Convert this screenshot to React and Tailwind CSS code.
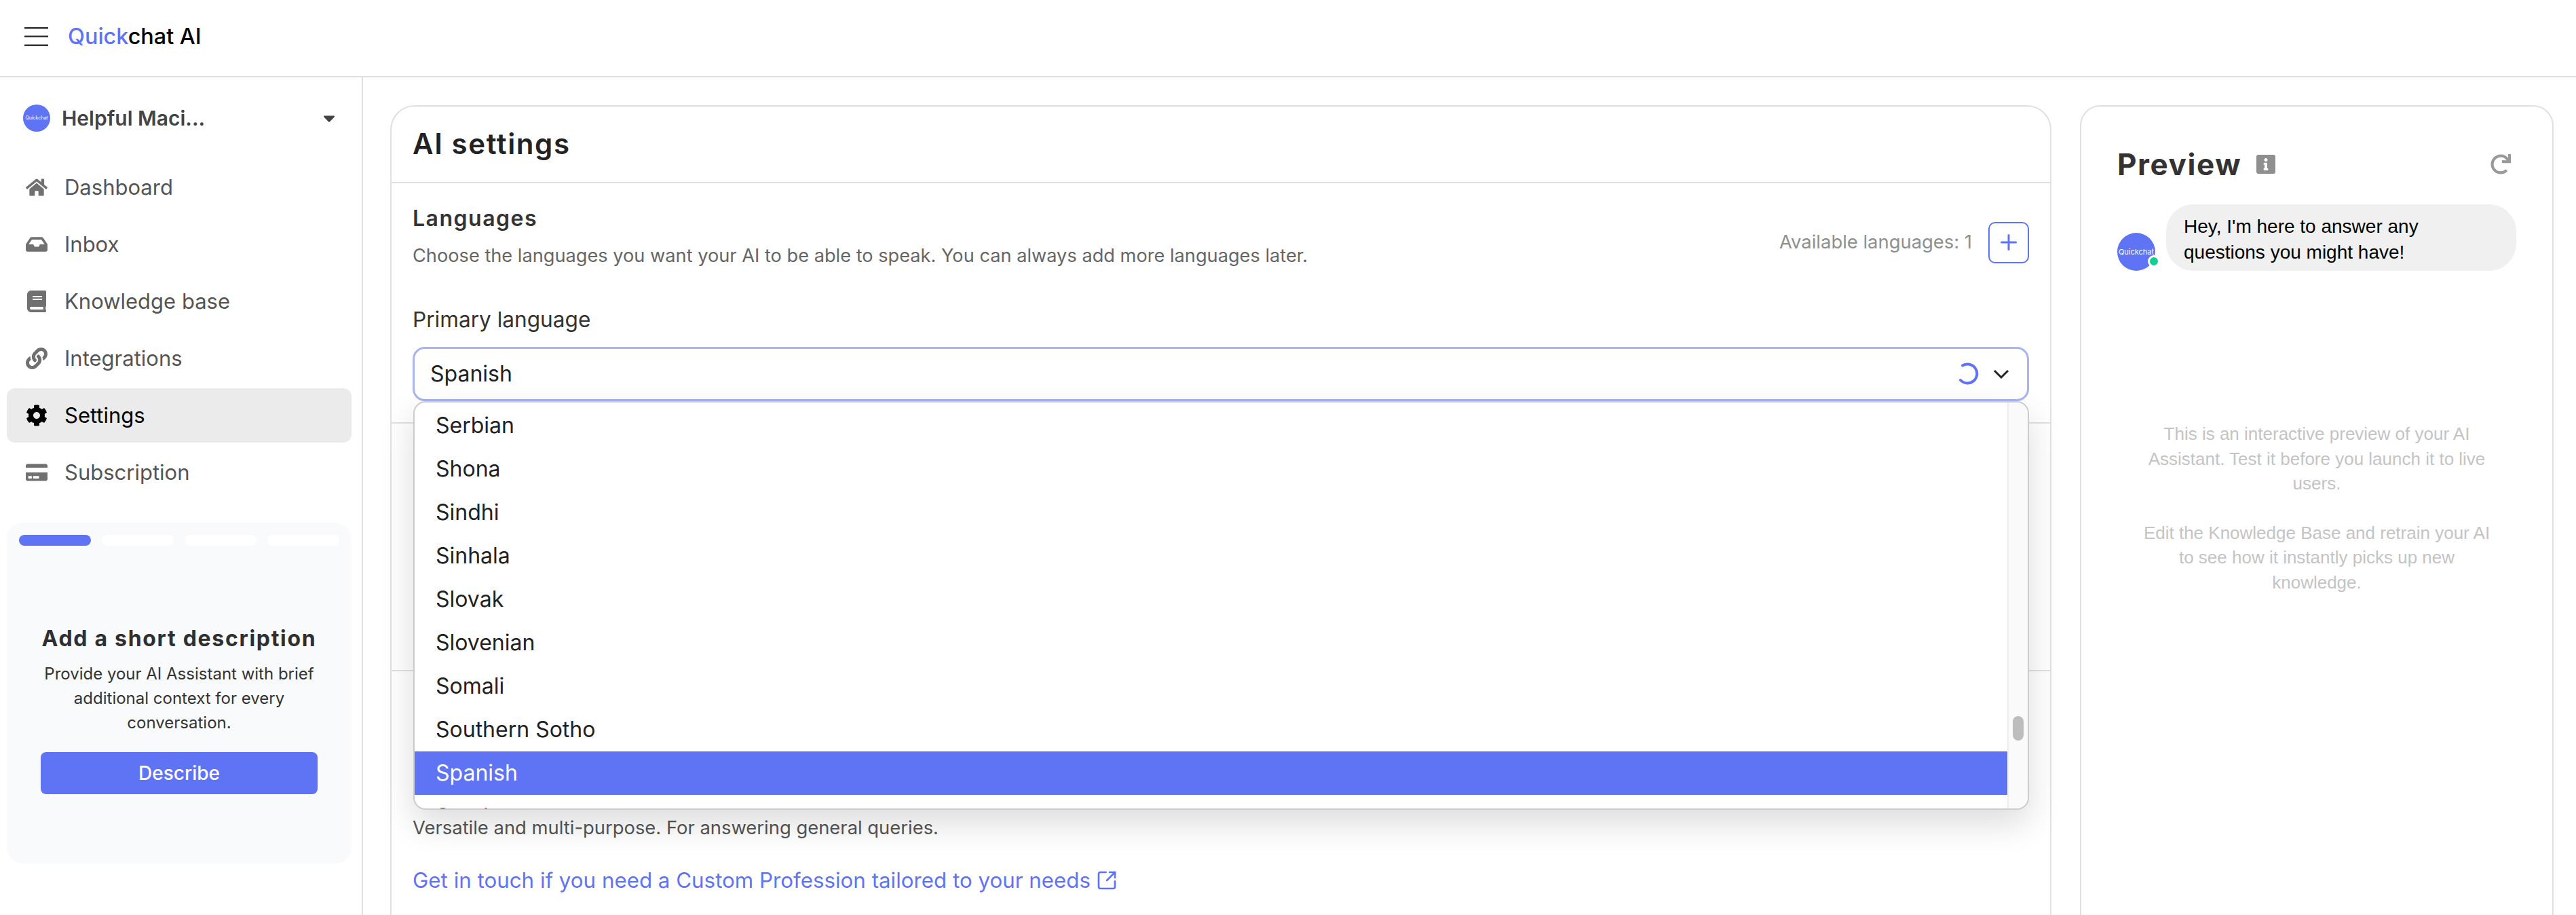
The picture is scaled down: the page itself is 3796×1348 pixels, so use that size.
import { FaHome, FaInbox, FaBook, FaLink, FaCog, FaCreditCard, FaCaretDown, FaInfo, FaRedo } from 'react-icons/fa';
import { Plus, SquareArrowOutUpRight } from 'lucide-react';

const navItems = [
  { label: 'Dashboard', icon: FaHome },
  { label: 'Inbox', icon: FaInbox },
  { label: 'Knowledge base', icon: FaBook },
  { label: 'Integrations', icon: FaLink },
  { label: 'Settings', icon: FaCog, active: true },
  { label: 'Subscription', icon: FaCreditCard },
];

const languages = ['Serbian', 'Shona', 'Sindhi', 'Sinhala', 'Slovak', 'Slovenian', 'Somali', 'Southern Sotho', 'Spanish', 'Sundanese'];

function Sidebar() {
  return (
    <aside className="w-[535px] shrink-0 border-r-2 border-[#e0e0e0] pl-[10px] pr-[15px] pt-10">
      <div className="flex h-10 items-center pl-6 pr-[19px]">
        <div className="flex h-10 w-10 items-center justify-center rounded-full bg-[#5f74f5] text-[7px] text-white">Quickchat</div>
        <span className="ml-[17px] flex-1 text-[30px] font-semibold text-[#444444]">Helpful Maci...</span>
        <FaCaretDown className="h-7 w-7 text-[#444444]" />
      </div>

      <nav className="mt-[42px] flex flex-col gap-1">
        {navItems.map(({ label, icon: Icon, active }) => (
          <div key={label} className={`flex h-20 items-center gap-[25px] rounded-xl pl-[28px] ${active ? 'bg-[#ebebeb] text-black' : 'text-[#555555]'}`}>
            <Icon className={`h-8 w-8 ${active ? 'text-black' : 'text-[#707070]'}`} />
            <span className="text-[31px]">{label}</span>
          </div>
        ))}
      </nav>

      <div className="mt-[34px] h-[502px] rounded-3xl bg-[#f8fafb] px-[18px] pt-[18px]">
        <div className="flex gap-4">
          <div className="h-4 flex-1 rounded-full bg-[#5f74f5]" />
          <div className="h-4 flex-1 rounded-full bg-white" />
          <div className="h-4 flex-1 rounded-full bg-white" />
          <div className="h-4 flex-1 rounded-full bg-white" />
        </div>
        <h3 className="mt-[117px] text-center text-[32px] leading-10 font-bold tracking-[1.7px] text-[#2f2f2f]">Add a short description</h3>
        <p className="mx-auto mt-[14px] w-[420px] text-center text-2xl leading-9 text-[#333333]">
          Provide your AI Assistant with brief additional context for every conversation.
        </p>
        <button className="mx-auto mt-[25px] block h-[62px] w-[408px] rounded-lg bg-[#5f74f5] text-[28px] font-medium text-white">Describe</button>
      </div>
    </aside>
  );
}

function LanguageDropdown() {
  return (
    <div className="absolute top-full right-0 left-px z-10 flex h-[602px] overflow-hidden rounded-[18px] border-2 border-[#cccccc] bg-white shadow-[0_20px_50px_rgba(0,0,0,0.14)]">
      <ul className="flex-1 pt-[2px]">
        {languages.map((lang) => (
          <li key={lang} className={`flex h-16 items-center pl-[31px] text-[32px] ${lang === 'Spanish' ? 'bg-[#5f74f5] text-white' : 'text-[#222222]'}`}>
            {lang}
          </li>
        ))}
      </ul>
      <div className="w-[30px] shrink-0 border-l-2 border-[#eeeeee] bg-[#fafafa] pt-[462px]">
        <div className="mx-auto h-9 w-4 rounded-full bg-[#bdbdbd]" />
      </div>
    </div>
  );
}

function SettingsCard() {
  return (
    <section className="h-[1300px] w-[2448px] shrink-0 rounded-t-[36px] border-2 border-[#e0e0e0]">
      <div className="flex h-[113px] items-center border-b-2 border-[#e0e0e0] px-[31px] pb-[3px]">
        <h1 className="text-[42px] font-semibold tracking-[1.6px] text-[#222222]">AI settings</h1>
      </div>

      <div className="border-b-2 border-[#e0e0e0] px-[31px] pt-8 pb-[31px]">
        <div className="flex items-center justify-between">
          <div>
            <h2 className="text-[32px] leading-10 font-semibold tracking-[1.5px] text-[#333333]">Languages</h2>
            <p className="mt-[17px] text-[27.2px] leading-9 text-[#666666]">Choose the languages you want your AI to be able to speak. You can always add more languages later.</p>
          </div>
          <div className="mt-[17px] flex items-center gap-6">
            <span className="text-[27.4px] text-[#8f8f8f]">Available languages: 1</span>
            <button className="flex h-[61px] w-[60px] items-center justify-center rounded-[10px] border-2 border-[#5f74f5] text-[#5f74f5]">
              <Plus className="h-9 w-9" strokeWidth={2} />
            </button>
          </div>
        </div>

        <label className="mt-[56px] block text-[31.6px] leading-10 text-[#333333]">Primary language</label>
        <div className="relative mt-5">
          <div className="flex h-20 items-center rounded-[18px] border-[3px] border-[#a9b4f0] pr-[26px] pl-[23px]">
            <span className="flex-1 text-[32px] text-[#222222]">Spanish</span>
            <svg className="h-[34px] w-[34px]" viewBox="0 0 34 34" fill="none">
              <path d="M9 4.5A14 14 0 1 1 6 26" stroke="#5f74f5" strokeWidth="4" strokeLinecap="round" />
            </svg>
            <svg className="ml-[20px] h-4 w-[24px]" viewBox="0 0 24 16" fill="none">
              <path d="M2 3l10 10L22 3" stroke="#222222" strokeWidth="3" />
            </svg>
          </div>
          <LanguageDropdown />
        </div>
      </div>

      <div className="h-[365px] border-b-2 border-[#e0e0e0]" />

      <div className="px-[31px] pt-[212px]">
        <p className="text-[27.4px] leading-9 text-[#555555]">Versatile and multi-purpose. For answering general queries.</p>
        <a className="mt-10 flex items-center gap-2 text-[31.3px] leading-10 text-[#5f74f5]">
          Get in touch if you need a Custom Profession tailored to your needs
          <SquareArrowOutUpRight className="h-8 w-8" strokeWidth={2} />
        </a>
      </div>
    </section>
  );
}

function PreviewCard() {
  return (
    <section className="h-[1300px] w-[698px] shrink-0 rounded-t-[30px] border-2 border-[#e0e0e0] px-[53px] pt-[57px] [font-family:'Liberation_Sans',sans-serif]">
      <div className="flex h-14 items-center pr-[8px]">
        <h2 className="text-[44px] font-bold tracking-[1.6px] text-[#333333] [font-family:Inter,sans-serif]">Preview</h2>
        <div className="ml-[22px] flex h-7 w-7 items-center justify-center rounded-[3px] bg-[#8f8f8f]">
          <FaInfo className="h-[18px] w-[18px] text-white" />
        </div>
        <FaRedo className="ml-auto h-[30px] w-[30px] text-[#999999]" />
      </div>

      <div className="mt-[31px] flex items-end gap-4">
        <div className="relative flex h-14 w-14 shrink-0 items-center justify-center rounded-full bg-[#5f74f5] text-[11px] text-white [font-family:Inter,sans-serif]">
          Quickchat
          <span className="absolute right-[-7px] bottom-[5px] h-[18px] w-[18px] rounded-full border-[3px] border-white bg-[#10d090]" />
        </div>
        <div className="h-[98px] w-[516px] rounded-[40px] bg-[#f0f0f0] pt-[14px] pr-[60px] pl-[26px] text-[28px] leading-[38px] text-black">
          Hey, I'm here to answer any questions you might have!
        </div>
      </div>

      <div className="mx-auto mt-[222px] w-[530px] text-center text-[26px] leading-[36.5px] text-[#c4c4c4]">
        <p>This is an interactive preview of your AI Assistant. Test it before you launch it to live users.</p>
        <p className="mt-9">Edit the Knowledge Base and retrain your AI to see how it instantly picks up new knowledge.</p>
      </div>
    </section>
  );
}

export default function App() {
  return (
    <div className="flex h-screen flex-col overflow-hidden bg-white [font-family:Inter,sans-serif]">
      <header className="flex h-[114px] shrink-0 items-center gap-[29px] border-b-2 border-[#e0e0e0] pb-[4px] pl-9">
        <svg className="h-7 w-[35px] text-[#333333]" viewBox="0 0 35 28" fill="currentColor">
          <rect width="35" height="2.5" />
          <rect y="12.5" width="35" height="2.5" />
          <rect y="25.5" width="35" height="2.5" />
        </svg>
        <div className="text-[32.4px] font-medium text-black">
          <span className="text-[#5f74f5]">Quick</span>chat AI
        </div>
      </header>
      <div className="flex min-h-0 flex-1">
        <Sidebar />
        <main className="flex flex-1 gap-[42px] pt-[41px] pl-10">
          <SettingsCard />
          <PreviewCard />
        </main>
      </div>
    </div>
  );
}
